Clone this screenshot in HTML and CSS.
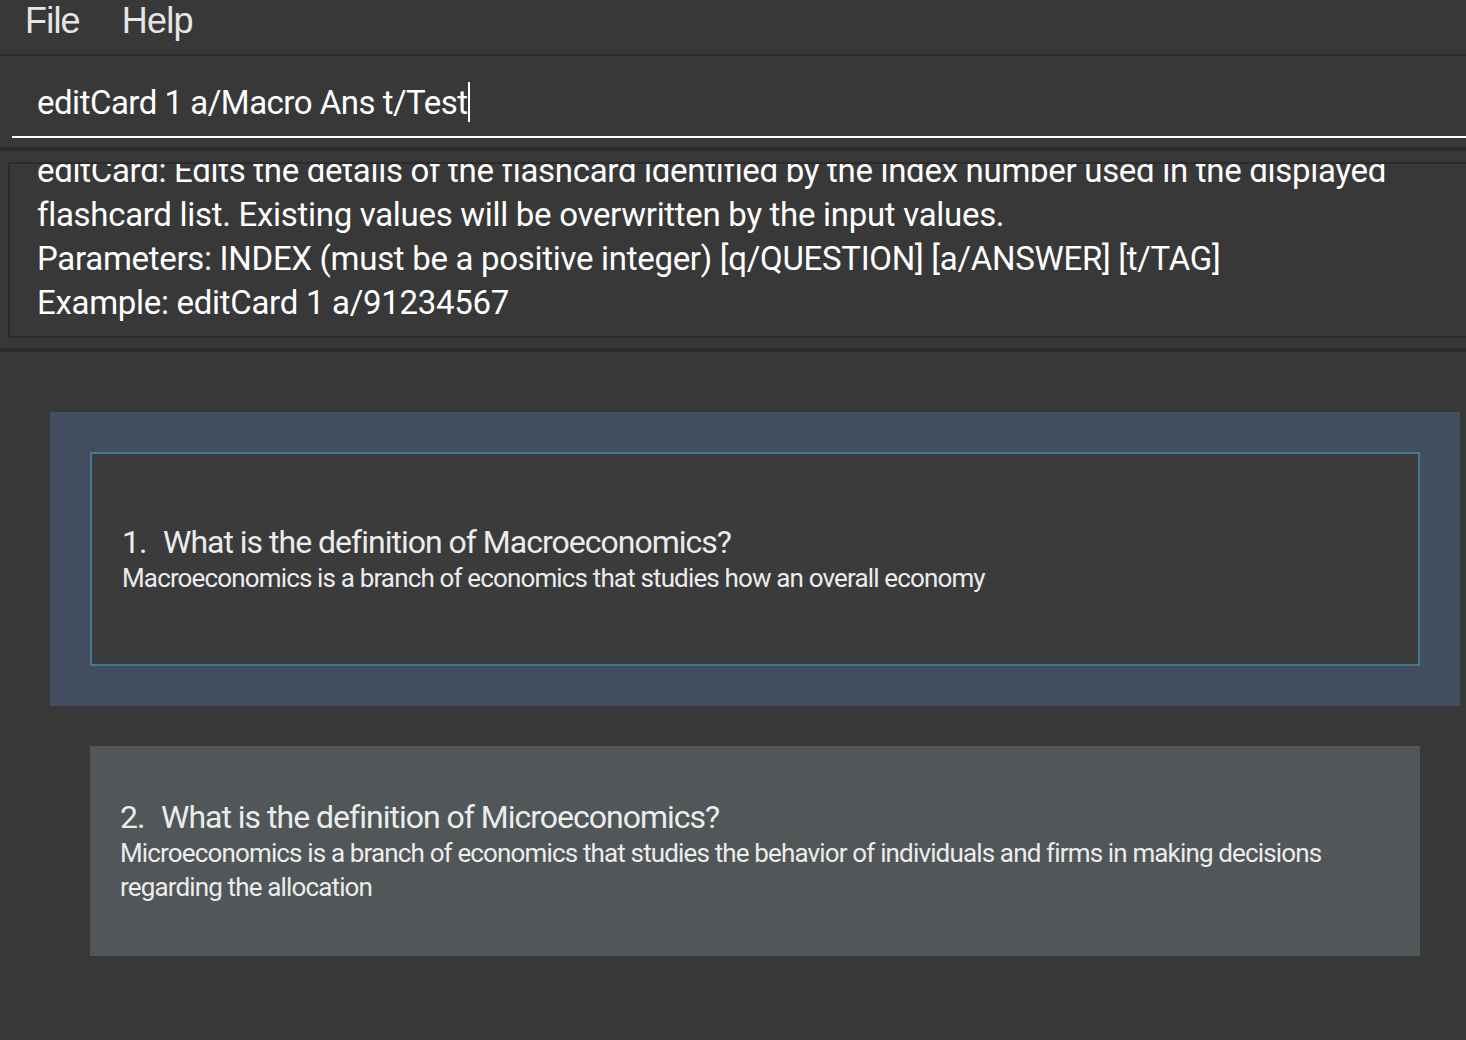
FILE: index.html
```html
<!DOCTYPE html>
<html>
<head>
<meta charset="utf-8">
<title>Flashcards</title>
<link rel="stylesheet" href="styles.css">
</head>
<body>
<div class="app">
  <div class="menubar">
    <span class="menu-item">File</span>
    <span class="menu-item">Help</span>
  </div>
  <div class="command-pane">
    <div class="command-input"><span class="command-text">editCard 1 a/Macro Ans t/Test</span><span class="caret"></span></div>
  </div>
  <div class="result-pane">
    <div class="result-box">
      <div class="result-text">editCard: Edits the details of the flashcard identified by the index number used in the displayed<br>flashcard list. Existing values will be overwritten by the input values.<br>Parameters: INDEX (must be a positive integer) [q/QUESTION] [a/ANSWER] [t/TAG]<br>Example: editCard 1 a/91234567</div>
    </div>
  </div>
  <div class="list-pane">
    <div class="cell cell-selected">
      <div class="card card-selected">
        <div class="card-title"><span class="card-index">1.</span>What is the definition of Macroeconomics?</div>
        <div class="card-answer">Macroeconomics is a branch of economics that studies how an overall economy</div>
      </div>
    </div>
    <div class="cell">
      <div class="card card-plain">
        <div class="card-title"><span class="card-index">2.</span>What is the definition of Microeconomics?</div>
        <div class="card-answer">Microeconomics is a branch of economics that studies the behavior of individuals and firms in making decisions regarding the allocation</div>
      </div>
    </div>
  </div>
</div>
</body>
</html>
```
FILE: styles.css
```css
html, body {
  margin: 0;
  padding: 0;
}
body {
  background: #383838;
  width: 1466px;
  height: 1040px;
  overflow: hidden;
  font-family: Roboto, "Liberation Sans", sans-serif;
  color: #ffffff;
}
.app {
  display: flex;
  flex-direction: column;
  height: 1040px;
}
.menubar {
  height: 56px;
  box-sizing: border-box;
  border-bottom: 2px solid #2c2c2c;
  display: flex;
  align-items: flex-start;
  gap: 42px;
  padding-left: 25px;
  font-family: "Liberation Sans", Arial, sans-serif;
  font-size: 36px;
  line-height: 42px;
  letter-spacing: -0.8px;
  color: #e6e6e6;
}
.command-pane {
  height: 95px;
  box-sizing: border-box;
  border-bottom: 4px solid #2c2c2c;
  padding-left: 12px;
}
.command-input {
  height: 55px;
  padding-top: 25px;
  padding-left: 25px;
  border-bottom: 2px solid #ffffff;
  display: flex;
  align-items: flex-start;
  font-size: 33px;
  line-height: 44px;
  letter-spacing: -0.5px;
  white-space: nowrap;
}
.caret {
  display: inline-block;
  width: 0;
  height: 40px;
  border-left: 2px solid #ffffff;
  margin-top: 1px;
}
.result-pane {
  height: 201px;
  border-bottom: 4px solid #2c2c2c;
  padding: 11px 0 0 8px;
  box-sizing: border-box;
}
.result-box {
  height: 176px;
  box-sizing: border-box;
  border: 2px solid #2b2b2b;
  margin-right: -20px;
  overflow: hidden;
  padding-left: 27px;
}
.result-text {
  margin-top: -15px;
  font-size: 33px;
  line-height: 44px;
  letter-spacing: -0.3px;
  white-space: nowrap;
}
.list-pane {
  flex: 1;
  padding: 60px 6px 0 50px;
}
.cell {
  padding: 40px;
}
.cell-selected {
  background: #424d5f;
}
.card {
  height: 210px;
  display: flex;
  flex-direction: column;
  justify-content: center;
  padding: 0 30px;
  color: #ececec;
}
.card-selected {
  border: 2px solid #3e7b91;
  background: #3b3b3c;
}
.card-plain {
  background: #515658;
}
.card-title {
  font-size: 32px;
  line-height: 38px;
  letter-spacing: -1px;
}
.card-index {
  display: inline-block;
  width: 41px;
}
.card-answer {
  font-size: 26px;
  line-height: 34px;
  letter-spacing: -0.85px;
}
```
